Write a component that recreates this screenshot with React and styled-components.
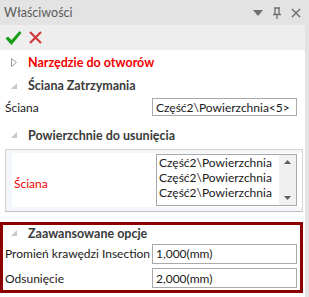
import React from 'react';
import styled, { createGlobalStyle } from 'styled-components';

const Global = createGlobalStyle`
  html, body { margin: 0; padding: 0; background: #fff; }
  body { font-family: Lato, "Noto Sans", sans-serif; font-size: 12px; }
  * { box-sizing: border-box; }
`;

const Panel = styled.div`
  width: 309px;
  height: 297px;
  display: flex;
  flex-direction: column;
  background: #e3e3e3;
  overflow: hidden;
`;

const TitleBar = styled.div`
  height: 25px;
  display: flex;
  align-items: center;
  padding: 0 8px 0 4px;
  color: #5a5a5a;
  font-size: 12.5px;

  .title { flex: 1; }
  .btns { display: flex; align-items: center; gap: 9px; }
`;

const Body = styled.div`
  flex: 1;
  margin-right: 4px;
  background: #fff;
  display: flex;
  flex-direction: column;
`;

const Toolbar = styled.div`
  height: 25px;
  background: #eeeeee;
  display: flex;
  align-items: center;
  gap: 7px;
  padding-left: 5px;
`;

const Header = styled.div`
  height: ${p => p.$h || 24}px;
  display: flex;
  align-items: center;
  padding-left: ${p => p.$pl ?? 11}px;
  font-weight: 700;
  font-size: 12.5px;
  color: ${p => (p.$red ? '#f00000' : '#3a3a3a')};

  .arrow { width: 17px; display: flex; align-items: center; }
`;

const Row = styled.div`
  height: ${p => p.$h || 20}px;
  display: flex;
  align-items: center;
  padding: 0 ${p => p.$pr ?? 7}px 0 ${p => p.$pl ?? 5}px;
`;

const Label = styled.div`
  width: ${p => p.$w || '147px'};
  white-space: nowrap;
  color: ${p => (p.$red ? '#f00000' : '#1a1a1a')};
`;

const Input = styled.div`
  flex: 1;
  height: ${p => p.$h || 19}px;
  border: 1px solid #a9a9a9;
  background: #fff;
  display: flex;
  align-items: center;
  padding-left: 3px;
  color: #1a1a1a;
  white-space: nowrap;
`;

const Group = styled.div`
  margin: 2px 2px 0 5px;
  height: 63px;
  border: 1px solid #d4d4d4;
  border-bottom-color: #c0c0c0;
  background: #f3f6fa;
  display: flex;
  align-items: center;
  padding: 0 0 0 6px;
`;

const GroupInner = styled.div`
  flex: 1;
  align-self: stretch;
  margin: 3px 0 4px;
  background: #fff;
  display: flex;
  align-items: center;
  padding: 6px 5px 0 2px;
`;

const ListBox = styled.div`
  width: 141px;
  height: 52px;
  margin: -6px 0 0 auto;
  border: 1px solid #a9a9a9;
  display: flex;
  background: #fff;
`;

const Items = styled.div`
  flex: 1;
  padding: 0 0 0 2px;
  line-height: 15px;
  white-space: nowrap;
  overflow: hidden;
  color: #1a1a1a;
`;

const Scroll = styled.div`
  width: 17px;
  background: #f0f0f0;
  display: flex;
  flex-direction: column;
  justify-content: space-between;
  align-items: center;
  padding: 5px 0;
`;

const Advanced = styled.div`
  margin: 10px 2px 0 0;
  border: 3px solid #8b0000;
  height: 71px;
  display: flex;
  flex-direction: column;
`;

const Expanded = () => (
  <svg width="6" height="6" viewBox="0 0 6 6"><path d="M6 0 L6 6 L0 6 Z" fill="#c8c8c8" /></svg>
);

const Collapsed = () => (
  <svg width="6" height="9" viewBox="0 0 6 9"><path d="M0.5 0.5 L5.5 4.5 L0.5 8.5 Z" fill="#fff" stroke="#a0a0a0" /></svg>
);

export default function App() {
  return (
    <Panel>
      <Global />
      <TitleBar>
        <span className="title">Właściwości</span>
        <div className="btns">
          <svg width="10" height="6" viewBox="0 0 10 6"><path d="M0 0 H10 L5 6 Z" fill="#6e6e6e" /></svg>
          <svg width="10" height="12" viewBox="0 0 10 12" fill="none" stroke="#6e6e6e" strokeWidth="1.3">
            <path d="M3 1 V7 M7 1 V7 M2 1 H8 M1 7.5 H9 M5 7.5 V12" />
          </svg>
          <svg width="10" height="10" viewBox="0 0 10 10" stroke="#6e6e6e" strokeWidth="1.5">
            <path d="M1 1 L9 9 M9 1 L1 9" />
          </svg>
        </div>
      </TitleBar>
      <Body>
        <Toolbar>
          <svg width="17" height="16" viewBox="0 0 17 16">
            <path d="M0.5 8.5 L3 6.5 L6.5 10 L14.5 1 L16.5 3 L6.5 15 Z" fill="#17a017" />
          </svg>
          <svg width="13" height="13" viewBox="0 0 13 13" stroke="#d03a3a" strokeWidth="2.2">
            <path d="M1 1 L12 12 M12 1 L1 12" />
          </svg>
        </Toolbar>
        <Header $red $h={24}>
          <span className="arrow"><Collapsed /></span>Narzędzie do otworów
        </Header>
        <Header $h={23}>
          <span className="arrow"><Expanded /></span>Ściana Zatrzymania
        </Header>
        <Row $h={20} $pr={8}>
          <Label>Ściana</Label>
          <Input $h={18}>Część2\Powierzchnia&lt;5&gt;</Input>
        </Row>
        <Header $h={30} style={{ paddingTop: 6 }}>
          <span className="arrow"><Expanded /></span>Powierzchnie do usunięcia
        </Header>
        <Group>
          <GroupInner>
            <Label $red $w="auto">Ściana</Label>
            <ListBox>
              <Items>
                <div>Część2\Powierzchnia</div>
                <div>Część2\Powierzchnia</div>
                <div>Część2\Powierzchnia</div>
              </Items>
              <Scroll>
                <svg width="7" height="4" viewBox="0 0 7 4"><path d="M0 4 L3.5 0 L7 4 Z" fill="#606060" /></svg>
                <svg width="7" height="4" viewBox="0 0 7 4"><path d="M0 0 L7 0 L3.5 4 Z" fill="#606060" /></svg>
              </Scroll>
            </ListBox>
          </GroupInner>
        </Group>
        <Advanced>
          <Header $h={16} $pl={8}>
            <span className="arrow"><Expanded /></span>Zaawansowane opcje
          </Header>
          <Row $h={25} $pr={3} $pl={2}>
            <Label>Promień krawędzi Insection</Label>
            <Input $h={20}>1,000(mm)</Input>
          </Row>
          <Row $h={24} $pr={3} $pl={2}>
            <Label>Odsunięcie</Label>
            <Input $h={20}>2,000(mm)</Input>
          </Row>
        </Advanced>
      </Body>
    </Panel>
  );
}
